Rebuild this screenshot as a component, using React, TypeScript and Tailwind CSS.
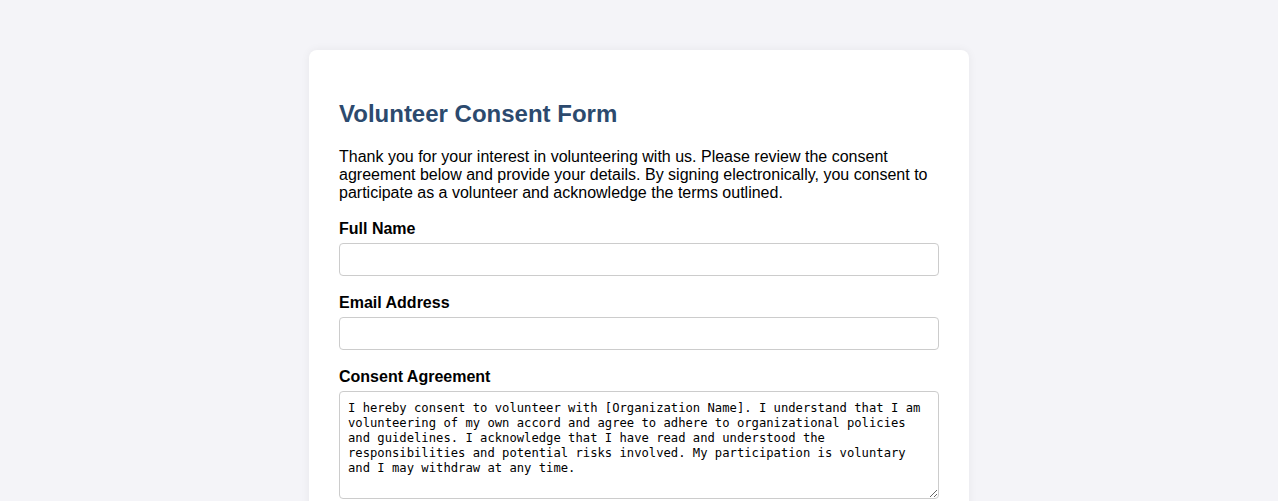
const AGREEMENT =
  "I hereby consent to volunteer with [Organization Name]. I understand that I am volunteering of my own accord and agree to adhere to organizational policies and guidelines. I acknowledge that I have read and understood the responsibilities and potential risks involved. My participation is voluntary and I may withdraw at any time."

function Label({ children }: { children: string }) {
  return <label className="mb-[4px] block text-[16px] font-bold leading-[20px] text-black">{children}</label>
}

function Field({ label, type = "text" }: { label: string; type?: string }) {
  return (
    <div className="mb-[17px]">
      <Label>{label}</Label>
      <input
        type={type}
        className="box-border block h-[33px] w-full rounded-[4px] border border-[#cccccc] bg-white px-2 text-[16px] outline-none"
      />
    </div>
  )
}

export default function App() {
  return (
    <div className="h-[501px] overflow-hidden bg-[#f4f4f8] pt-[50px] font-['Liberation_Sans',Arial,sans-serif]">
      <div className="mx-auto w-[660px] rounded-[8px] bg-white p-[30px] shadow-[0_0_10px_rgba(0,0,0,0.06)]">
        <h1 className="mb-[20px] mt-[20px] text-[24px] font-bold leading-[28px] text-[#2c4a6e]">
          Volunteer Consent Form
        </h1>
        <p className="mb-[17px] text-[16px] leading-[18px] text-black">
          Thank you for your interest in volunteering with us. Please review the consent agreement below and provide your
          details. By signing electronically, you consent to participate as a volunteer and acknowledge the terms
          outlined.
        </p>
        <form onSubmit={(e) => e.preventDefault()}>
          <Field label="Full Name" />
          <Field label="Email Address" type="email" />
          <div className="mb-[17px]">
            <Label>Consent Agreement</Label>
            <textarea
              readOnly
              defaultValue={AGREEMENT}
              className="box-border block h-[108px] w-full rounded-[4px] border border-[#cccccc] bg-white px-[8px] pb-[7px] pt-[9px] font-['DejaVu_Sans_Mono',monospace] text-[12.2px] leading-[15px] text-black outline-none"
            />
          </div>
        </form>
      </div>
    </div>
  )
}
